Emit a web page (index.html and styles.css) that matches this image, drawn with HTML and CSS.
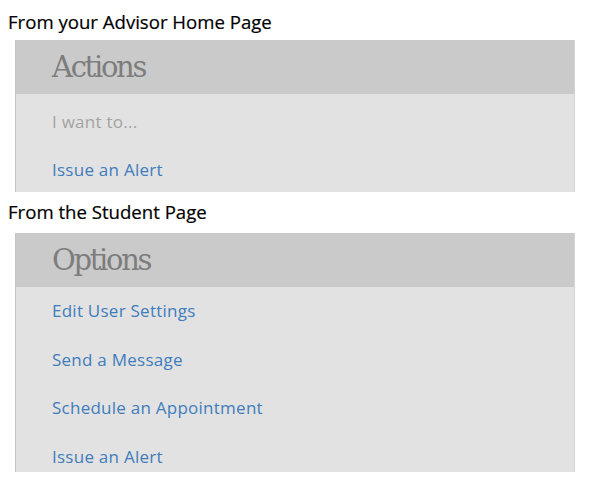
FILE: index.html
```html
<!DOCTYPE html>
<html>
<head>
<meta charset="utf-8">
<link rel="stylesheet" href="styles.css">
</head>
<body>
  <h2 class="caption caption-first">From your Advisor Home Page</h2>
  <section class="panel panel-first">
    <div class="panel-head">Actions</div>
    <ul class="panel-list list-actions">
      <li class="item item-muted">I want to...</li>
      <li class="item"><a class="link">Issue an Alert</a></li>
    </ul>
  </section>
  <h2 class="caption caption-second">From the Student Page</h2>
  <section class="panel panel-second">
    <div class="panel-head">Options</div>
    <ul class="panel-list list-options">
      <li class="item"><a class="link">Edit User Settings</a></li>
      <li class="item"><a class="link">Send a Message</a></li>
      <li class="item"><a class="link">Schedule an Appointment</a></li>
      <li class="item"><a class="link">Issue an Alert</a></li>
    </ul>
  </section>
</body>
</html>
```
FILE: styles.css
```css
html, body {
  margin: 0;
  padding: 0;
  background: #ffffff;
}

body {
  width: 593px;
  height: 488px;
  overflow: hidden;
}

.caption {
  margin: 0;
  padding-left: 8px;
  font-family: "Open Sans", "Liberation Sans", sans-serif;
  font-weight: 400;
  font-size: 18.6px;
  line-height: 24px;
  color: #000000;
  -webkit-text-stroke: 0.2px #000000;
}

.caption-first {
  padding-top: 10px;
}

.caption-second {
  margin-top: 7.5px;
}

.panel {
  margin-left: 15px;
  width: 560px;
  box-sizing: border-box;
  border-left: 1px solid #c4c4c4;
  border-right: 1px solid #d4d4d4;
}

.panel-first {
  margin-top: 6px;
}

.panel-second {
  margin-top: 9.5px;
}

.panel-head {
  height: 54px;
  line-height: 54px;
  padding-left: 36px;
  background: #cacaca;
  font-family: "DejaVu Serif", "Liberation Serif", serif;
  font-size: 29px;
  letter-spacing: -2.3px;
  color: #7d7d7d;
}

.panel-list {
  list-style: none;
  margin: 0;
  padding: 0 0 0 36px;
  background: #e2e2e2;
  overflow: hidden;
  font-family: "Open Sans", "Liberation Sans", sans-serif;
  font-size: 17px;
  letter-spacing: 0.25px;
}

.list-actions {
  height: 98px;
  padding-top: 3.5px;
  box-sizing: border-box;
}

.list-options {
  height: 185px;
}

.item {
  padding: 14.25px 0;
  line-height: 20px;
}

.item-muted {
  color: #a3a3a3;
}

.link {
  color: #3f7dbd;
  text-decoration: none;
}
```
